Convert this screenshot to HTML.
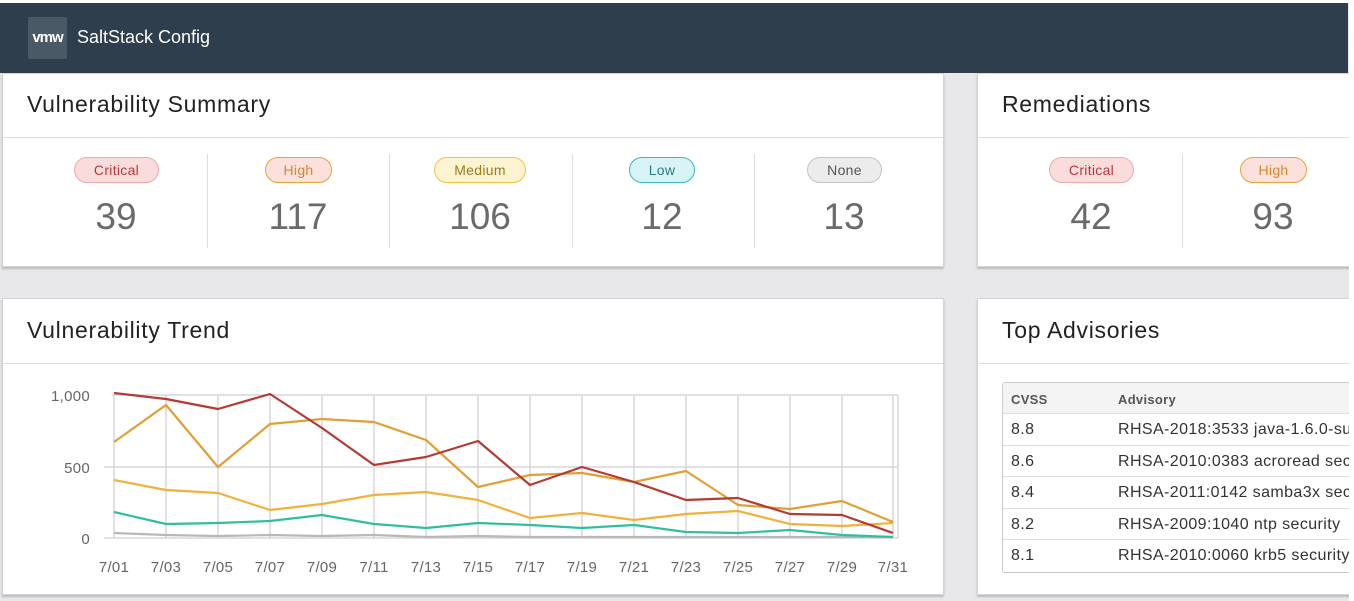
<!DOCTYPE html><html><head><style>
*{margin:0;padding:0;box-sizing:border-box}
body{width:1354px;height:601px;background:#e8e7ea;font-family:"Liberation Sans",sans-serif;position:relative;overflow:hidden}
.abs{position:absolute}
.top{left:0;top:3px;width:1348px;height:70px;background:#2f3e4d}
.logo{left:28px;top:17px;width:39px;height:42px;background:#4b5866;border-radius:2px;color:#fff;font-weight:bold;font-size:15px;line-height:42px;text-align:center;letter-spacing:-1px}
.brand{left:77px;top:27px;color:#fff;font-size:18px}
.card{background:#fff;border:1px solid #d4d4d6;box-shadow:0 2px 2px #bbb}
.title{font-size:23px;color:#222;letter-spacing:0.7px}
.hr{height:1px;background:#ddd}
.badge{height:26px;border-radius:13px;font-size:14px;line-height:24px;text-align:center;border:1.5px solid;letter-spacing:0.3px}
.num{font-size:37px;color:#6a6a6a;text-align:center;width:120px}
.div{width:1px;height:94px;background:#ddd;top:154px}
.tb{font-size:16px;color:#333;letter-spacing:0.4px}
</style></head><body>
<div class="abs top"></div>
<div class="abs logo">vmw</div>
<div class="abs brand">SaltStack Config</div>

<div class="abs card" style="left:2px;top:73px;width:942px;height:194px"></div>
<div class="abs title" style="left:27px;top:91px">Vulnerability Summary</div>
<div class="abs hr" style="left:3px;top:137px;width:940px"></div>

<div class="abs badge" style="left:74px;top:157px;width:85px;background:#fadcdc;border-color:#f0a8a8;color:#b7393a">Critical</div>
<div class="abs num" style="left:56px;top:196px">39</div>
<div class="abs div" style="left:207px"></div>
<div class="abs badge" style="left:265px;top:157px;width:67px;background:#fbe0dc;border-color:#e6a53b;color:#d4892a">High</div>
<div class="abs num" style="left:238px;top:196px">117</div>
<div class="abs div" style="left:389px"></div>
<div class="abs badge" style="left:434px;top:157px;width:92px;background:#fef4d2;border-color:#f0c342;color:#9e7a1a">Medium</div>
<div class="abs num" style="left:420px;top:196px">106</div>
<div class="abs div" style="left:572px"></div>
<div class="abs badge" style="left:629px;top:157px;width:66px;background:#d8f3f5;border-color:#3ab9c3;color:#2a7d86">Low</div>
<div class="abs num" style="left:602px;top:196px">12</div>
<div class="abs div" style="left:754px"></div>
<div class="abs badge" style="left:807px;top:157px;width:75px;background:#ececec;border-color:#c4c4c4;color:#555">None</div>
<div class="abs num" style="left:784px;top:196px">13</div>

<div class="abs card" style="left:977px;top:73px;width:390px;height:194px"></div>
<div class="abs title" style="left:1002px;top:91px">Remediations</div>
<div class="abs hr" style="left:978px;top:137px;width:376px"></div>
<div class="abs badge" style="left:1049px;top:157px;width:85px;background:#fadcdc;border-color:#f0a8a8;color:#b7393a">Critical</div>
<div class="abs num" style="left:1031px;top:196px">42</div>
<div class="abs div" style="left:1182px"></div>
<div class="abs badge" style="left:1240px;top:157px;width:67px;background:#fbe0dc;border-color:#e6a53b;color:#d4892a">High</div>
<div class="abs num" style="left:1213px;top:196px">93</div>

<div class="abs card" style="left:2px;top:298px;width:942px;height:297px"></div>
<div class="abs title" style="left:27px;top:317px">Vulnerability Trend</div>
<div class="abs hr" style="left:3px;top:363px;width:940px"></div>

<svg class="abs" style="left:0;top:0" width="944" height="601">
<g stroke="#d8d6da" stroke-width="1.5" fill="none">
<line x1="112" y1="395" x2="898" y2="395"/><line x1="104" y1="467" x2="898" y2="467"/><line x1="104" y1="538" x2="898" y2="538"/>
<path d="M114 395V538M166 395V538M218 395V538M270 395V538M322 395V538M374 395V538M426 395V538M478 395V538M530 395V538M582 395V538M634 395V538M686 395V538M738 395V538M790 395V538M842 395V538M893 395V538M898 395V538"/>
</g>
<g fill="none" stroke-width="2.2" stroke-linejoin="round">
<polyline stroke="#b8b8bc" points="114,533 166,535 218,536 270,535 322,536 374,535 426,537 478,536 530,537 582,537 634,537 686,537 738,537 790,537 842,537 893,537"/>
<polyline stroke="#2fbf9f" points="114,512 166,524 218,523 270,521 322,515 374,524 426,528 478,523 530,525 582,528 634,525 686,532 738,533 790,530 842,535 893,537"/>
<polyline stroke="#f0b23a" points="114,480 166,490 218,493 270,510 322,504 374,495 426,492 478,500 530,518 582,513 634,520 686,514 738,511 790,524 842,526 893,523"/>
<polyline stroke="#e0a035" points="114,442 166,405 218,467 270,424 322,419 374,422 426,440 478,487 530,475 582,473 634,482 686,471 738,505 790,509 842,501 893,522"/>
<polyline stroke="#b53a33" points="114,393 166,399 218,409 270,394 322,428 374,465 426,457 478,441 530,485 582,467 634,482 686,500 738,498 790,514 842,515 893,533"/>
</g>
<g font-family="Liberation Sans" font-size="15" fill="#666" letter-spacing="0.3">
<text x="90" y="401" text-anchor="end">1,000</text><text x="90" y="473" text-anchor="end">500</text><text x="90" y="544" text-anchor="end">0</text>
<g text-anchor="middle">
<text x="114" y="572">7/01</text><text x="166" y="572">7/03</text><text x="218" y="572">7/05</text><text x="270" y="572">7/07</text><text x="322" y="572">7/09</text><text x="374" y="572">7/11</text><text x="426" y="572">7/13</text><text x="478" y="572">7/15</text><text x="530" y="572">7/17</text><text x="582" y="572">7/19</text><text x="634" y="572">7/21</text><text x="686" y="572">7/23</text><text x="738" y="572">7/25</text><text x="790" y="572">7/27</text><text x="842" y="572">7/29</text><text x="893" y="572">7/31</text>
</g></g>
</svg>

<div class="abs card" style="left:977px;top:298px;width:390px;height:297px"></div>
<div class="abs title" style="left:1002px;top:317px">Top Advisories</div>
<div class="abs hr" style="left:978px;top:363px;width:376px"></div>
<div class="abs" style="left:1002px;top:382px;width:360px;height:191px;border:1px solid #ccc;border-radius:3px;overflow:hidden">
<div style="height:31px;background:#f4f4f5;border-bottom:1px solid #ddd;position:relative"><span class="abs" style="left:8px;top:9px;font-size:13px;font-weight:bold;color:#555;letter-spacing:0.3px">CVSS</span><span class="abs" style="left:115px;top:9px;font-size:13px;font-weight:bold;color:#555;letter-spacing:0.3px">Advisory</span></div>
<div style="height:32px;border-bottom:1px solid #ddd;position:relative" class="tb"><span class="abs" style="left:8px;top:7px">8.8</span><span class="abs" style="left:115px;top:7px;white-space:nowrap">RHSA-2018:3533 java-1.6.0-sun</span></div>
<div style="height:31px;border-bottom:1px solid #ddd;position:relative" class="tb"><span class="abs" style="left:8px;top:7px">8.6</span><span class="abs" style="left:115px;top:7px;white-space:nowrap">RHSA-2010:0383 acroread sec</span></div>
<div style="height:32px;border-bottom:1px solid #ddd;position:relative" class="tb"><span class="abs" style="left:8px;top:7px">8.4</span><span class="abs" style="left:115px;top:7px;white-space:nowrap">RHSA-2011:0142 samba3x sec</span></div>
<div style="height:31px;border-bottom:1px solid #ddd;position:relative" class="tb"><span class="abs" style="left:8px;top:7px">8.2</span><span class="abs" style="left:115px;top:7px;white-space:nowrap">RHSA-2009:1040 ntp security</span></div>
<div style="height:32px;position:relative" class="tb"><span class="abs" style="left:8px;top:7px">8.1</span><span class="abs" style="left:115px;top:7px;white-space:nowrap">RHSA-2010:0060 krb5 security</span></div>
</div>
<div class="abs" style="left:1349px;top:0;width:5px;height:601px;background:#fff"></div>
<div class="abs" style="left:0;top:0;width:1354px;height:3px;background:#fff"></div>
</body></html>
